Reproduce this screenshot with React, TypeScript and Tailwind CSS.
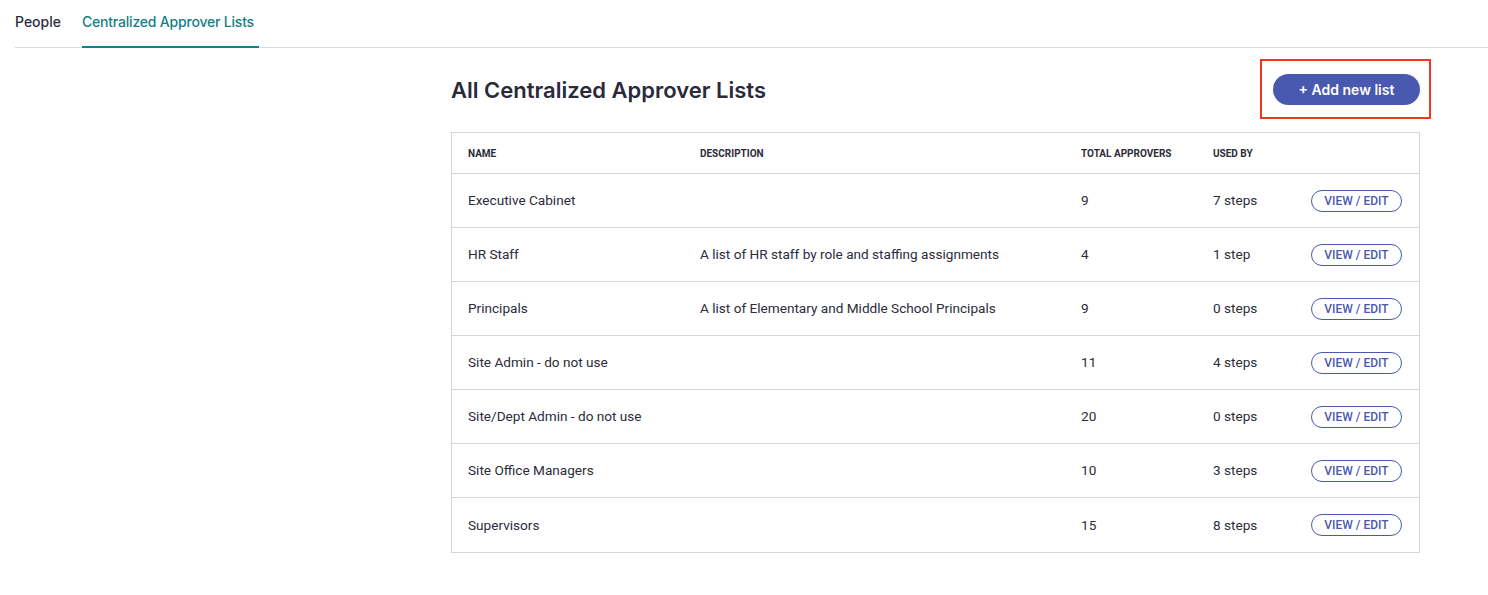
import React from "react";

const rows = [
  { name: "Executive Cabinet", desc: "", total: "9", used: "7 steps" },
  { name: "HR Staff", desc: "A list of HR staff by role and staffing assignments", total: "4", used: "1 step" },
  { name: "Principals", desc: "A list of Elementary and Middle School Principals", total: "9", used: "0 steps" },
  { name: "Site Admin - do not use", desc: "", total: "11", used: "4 steps" },
  { name: "Site/Dept Admin - do not use", desc: "", total: "20", used: "0 steps" },
  { name: "Site Office Managers", desc: "", total: "10", used: "3 steps" },
  { name: "Supervisors", desc: "", total: "15", used: "8 steps" },
];

const heading = { fontFamily: "Inter, 'Open Sans', sans-serif" };
const body = { fontFamily: "Roboto, 'Liberation Sans', sans-serif" };

const App = () => {
  return (
    <div className="min-h-[595px] bg-white text-[#2c2c3a]" style={body}>
      {/* tabs */}
      <div className="pl-[15px]">
        <div className="flex flex-row border-b border-[#dcdcdc] h-[48px]" style={heading}>
          <div className="pt-[11px] text-[14px] font-medium text-[#2c2c3a] whitespace-nowrap">People</div>
          <div className="ml-[21px] pt-[11px] text-[14px] font-medium text-[#137f87] border-b-2 border-[#137f87] -mb-px w-[177px] whitespace-nowrap tracking-[-0.2px]">
            Centralized Approver Lists
          </div>
        </div>
      </div>

      <div className="pl-[451px] pr-[68px]">
        <div className="flex flex-row items-center justify-between h-[84px]">
          <p className="text-[22px] font-semibold text-[#2a2a3a] pt-[1px]" style={heading}>
            All Centralized Approver Lists
          </p>
          <div className="border-2 border-[#f0361d] w-[171px] h-[60px] -mr-[11px] mt-[-2px] flex items-center pl-[11px]">
            <button
              className="w-[147px] h-[31px] rounded-full bg-[#4a59b0] text-white text-[14px] font-semibold"
              style={heading}
            >
              + Add new list
            </button>
          </div>
        </div>

        <div className="border border-[#d6d6d6]">
          <div className="flex flex-row items-center h-[41px] border-b border-[#d6d6d6] text-[10px] font-bold uppercase text-[#2c2c3a]">
            <div className="w-[248px] pl-[16px]">Name</div>
            <div className="w-[381px]">Description</div>
            <div className="w-[132px]">Total Approvers</div>
            <div className="flex-1">Used By</div>
          </div>
          {rows.map((r, i) => (
            <div
              key={r.name}
              className={
                "flex flex-row items-center h-[54px] text-[13.6px] text-[#2c2c3a] " +
                (i < rows.length - 1 ? "border-b border-[#d6d6d6]" : "")
              }
            >
              <div className="w-[248px] pl-[16px]">{r.name}</div>
              <div className="w-[381px]">{r.desc}</div>
              <div className="w-[132px]">{r.total}</div>
              <div className="w-[98px]">{r.used}</div>
              <button className="w-[91px] h-[22px] rounded-full border border-[#4a59b0] text-[#4a59b0] text-[12px] font-medium leading-none">
                VIEW / EDIT
              </button>
            </div>
          ))}
        </div>
      </div>
    </div>
  );
};

export default App;
